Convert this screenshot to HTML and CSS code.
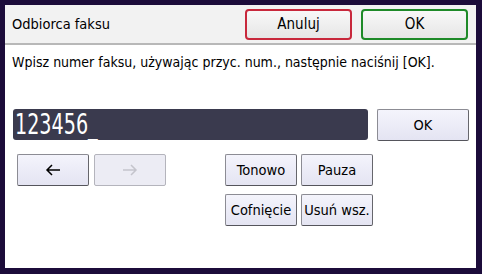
FILE: index.html
```html
<!DOCTYPE html>
<html lang="pl">
<head>
    <meta charset="UTF-8">
    <link rel="stylesheet" href="styles.css">
</head>
<body>
    <div class="screen">
        <div class="header">
            <div class="title">Odbiorca faksu</div>
            <div class="actions">
                <button class="btn btn-cancel">Anuluj</button>
                <button class="btn btn-ok">OK</button>
            </div>
        </div>

        <div class="hint">Wpisz numer faksu, używając przyc. num., następnie naciśnij [OK].</div>

        <div class="entry-row">
            <div class="entry"><span class="entry-text">123456_</span></div>
            <button class="key key-ok">OK</button>
        </div>

        <div class="keys">
            <div class="arrows">
                <button class="key">
                    <svg width="16" height="12" viewBox="0 0 16 12"><path d="M15 6H2M7 1L2 6l5 5" fill="none" stroke="#000" stroke-width="1.5"/></svg>
                </button>
                <button class="key key-off">
                    <svg width="16" height="12" viewBox="0 0 16 12"><path d="M1 6h13M9 1l5 5-5 5" fill="none" stroke="#c4c4cc" stroke-width="1.5"/></svg>
                </button>
            </div>
            <div class="grid">
                <button class="key">Tonowo</button>
                <button class="key">Pauza</button>
                <button class="key">Cofnięcie</button>
                <button class="key">Usuń wsz.</button>
            </div>
        </div>
    </div>
</body>
</html>
```

FILE: styles.css
```css
* {
    margin: 0;
    padding: 0;
    box-sizing: border-box;
}

body {
    background: #1c0c3a;
    font-family: 'DejaVu Sans Condensed', 'Liberation Sans', sans-serif;
    color: #000;
    width: 482px;
    height: 274px;
    overflow: hidden;
}

.screen {
    margin: 5px 6px 0 5px;
    height: 263px;
    background: #fff;
}

.header {
    display: flex;
    justify-content: space-between;
    align-items: center;
    height: 40px;
    padding: 0 8px 0 7px;
    background: #f2f2f2;
    border-bottom: 2px solid #b8b8b8;
}

.title {
    font-size: 14.5px;
}

.actions {
    display: flex;
    gap: 9px;
}

.btn {
    width: 107px;
    height: 31px;
    border-radius: 4px;
    font-family: inherit;
    font-size: 15px;
    background: linear-gradient(#f8f8f8, #e6e6e6);
}

.btn-cancel {
    border: 2px solid #c8283c;
}

.btn-ok {
    border: 2px solid #1e8a28;
}

.hint {
    padding: 9px 0 0 7px;
    font-size: 14px;
    height: 64px;
}

.entry-row {
    display: flex;
    gap: 9px;
    padding-left: 8px;
}

.entry {
    width: 355px;
    height: 31px;
    background: #3a3a4e;
    border-radius: 3px;
    color: #fff;
    font-size: 28px;
    line-height: 31px;
    padding-left: 2px;
    overflow: hidden;
}

.entry-text {
    display: inline-block;
    transform: scaleX(0.76);
    transform-origin: left center;
}

.key {
    width: 72px;
    height: 32px;
    border: 1px solid #8c8c94;
    border-bottom-color: #55555c;
    border-right-color: #66666c;
    border-radius: 2px;
    background: linear-gradient(#f4f4fc, #e4e4f2);
    font-family: inherit;
    font-size: 14.5px;
    white-space: nowrap;
    display: flex;
    align-items: center;
    justify-content: center;
}

.key-ok {
    width: 92px;
}

.key-off {
    border-color: #b4b4bc;
    background: #ececf4;
}

.keys {
    display: flex;
    padding: 13px 0 0 12px;
}

.arrows {
    display: flex;
    gap: 5px;
    width: 208px;
}

.grid {
    display: grid;
    grid-template-columns: 72px 72px;
    gap: 8px 4px;
}
```
